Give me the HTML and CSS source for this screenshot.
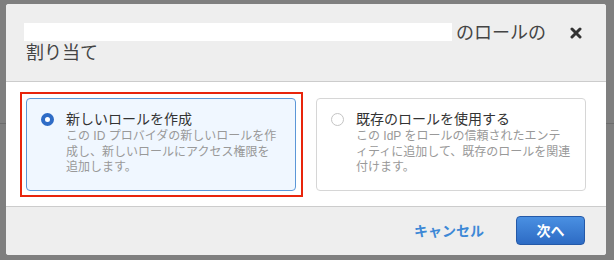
FILE: index.html
```html
<!DOCTYPE html>
<html lang="ja">
<head>
	<meta charset="utf-8">
	<meta name="viewport" content="width=device-width, initial-scale=1">
	<title>ロールの割り当て</title>
	<link rel="stylesheet" href="styles.css">
</head>
<body>
	<div class="modal">
		<div class="modal-header">
			<h2 class="modal-title"><span class="redacted"></span> のロールの<br>割り当て</h2>
			<button class="close" aria-label="閉じる">
				<svg width="12" height="12" viewBox="0 0 12 12"><path d="M2 2 L10 10 M10 2 L2 10" stroke="#333" stroke-width="3" stroke-linecap="round"/></svg>
			</button>
		</div>
		<div class="modal-body">
			<div class="option selected">
				<span class="radio"></span>
				<div class="option-text">
					<div class="option-title">新しいロールを作成</div>
					<div class="option-desc">この ID プロバイダの新しいロールを作<br>成し、新しいロールにアクセス権限を<br>追加します。</div>
				</div>
			</div>
			<div class="option">
				<span class="radio"></span>
				<div class="option-text">
					<div class="option-title">既存のロールを使用する</div>
					<div class="option-desc">この IdP をロールの信頼されたエンテ<br>ィティに追加して、既存のロールを関連<br>付けます。</div>
				</div>
			</div>
		</div>
		<div class="modal-footer">
			<button class="btn-link">キャンセル</button>
			<button class="btn-primary">次へ</button>
		</div>
	</div>
</body>
</html>
```

FILE: styles.css
```css
* {
	box-sizing: border-box;
	margin: 0;
	padding: 0;
}
body {
	font-family: "Liberation Sans", "Noto Sans CJK JP", sans-serif;
	height: 260px;
	overflow: hidden;
	background: linear-gradient(#7f7f7f 123px, #6c6c6c 123px, #6c6c6c 124px, #7f7f7f 124px);
	padding: 4px 8px 0 6px;
}
.modal {width: 600px; background: #fff; border-radius: 3px; overflow: hidden;}

/* header */
.modal-header {
	display: flex;
	align-items: flex-start;
	background: #eeeeee;
	border-bottom: 1px solid #cccccc;
	padding: 19px 24px 18px 20px;
}
.modal-title {flex: 1; font-size: 18px; line-height: 20px; font-weight: normal; color: #444;}
.redacted {display: inline-block; width: 428px; height: 18px; background: #fff; margin-left: -2px; margin-right: -1px; vertical-align: -2px;}
.close {border: 0; background: none; width: 12px; height: 12px; margin-top: 4px; display: flex;}

/* body */
.modal-body {
	display: grid;
	grid-template-columns: 1fr 1fr;
	gap: 20px;
	padding: 16px 20px 15px 20px;
}
.option {
	position: relative;
	display: flex;
	gap: 12px;
	border: 1px solid #d6d6d6;
	border-radius: 4px;
	padding: 11px 6px 14px 14px;
	background: #fff;
}
.option.selected {background: #f0f7ff; border-color: #5b97d8;}
/* red highlight frame around the chosen option */
.option.selected::after {
	content: "";
	position: absolute;
	inset: -7px -8px -7px -7px;
	border: 2px solid #e8250c;
}
.radio {
	flex: none;
	width: 13px;
	height: 13px;
	margin-top: 3px;
	border-radius: 50%;
	border: 1px solid #c4c4c4;
	background: #fff;
}
.selected .radio {border: 4px solid #2f6cc6;}
.option-title {font-size: 14px; line-height: 18px; color: #333;}
.option-desc {font-size: 12px; line-height: 15.5px; color: #999; margin-top: 1px;}

/* footer */
.modal-footer {
	display: flex;
	justify-content: flex-end;
	align-items: center;
	gap: 32px;
	background: #eeeeee;
	border-top: 1px solid #cccccc;
	padding: 9px 21px 10px 20px;
}
.btn-link {border: 0; background: none; font: bold 14px "Liberation Sans", "Noto Sans CJK JP", sans-serif; color: #3d88d6;}
.btn-primary {
	width: 69px;
	height: 29px;
	border: 1px solid #2459a8;
	border-radius: 4px;
	background: linear-gradient(#4a90e2, #2d6bc4);
	color: #fff;
	font: bold 14px "Liberation Sans", "Noto Sans CJK JP", sans-serif;
}
```
